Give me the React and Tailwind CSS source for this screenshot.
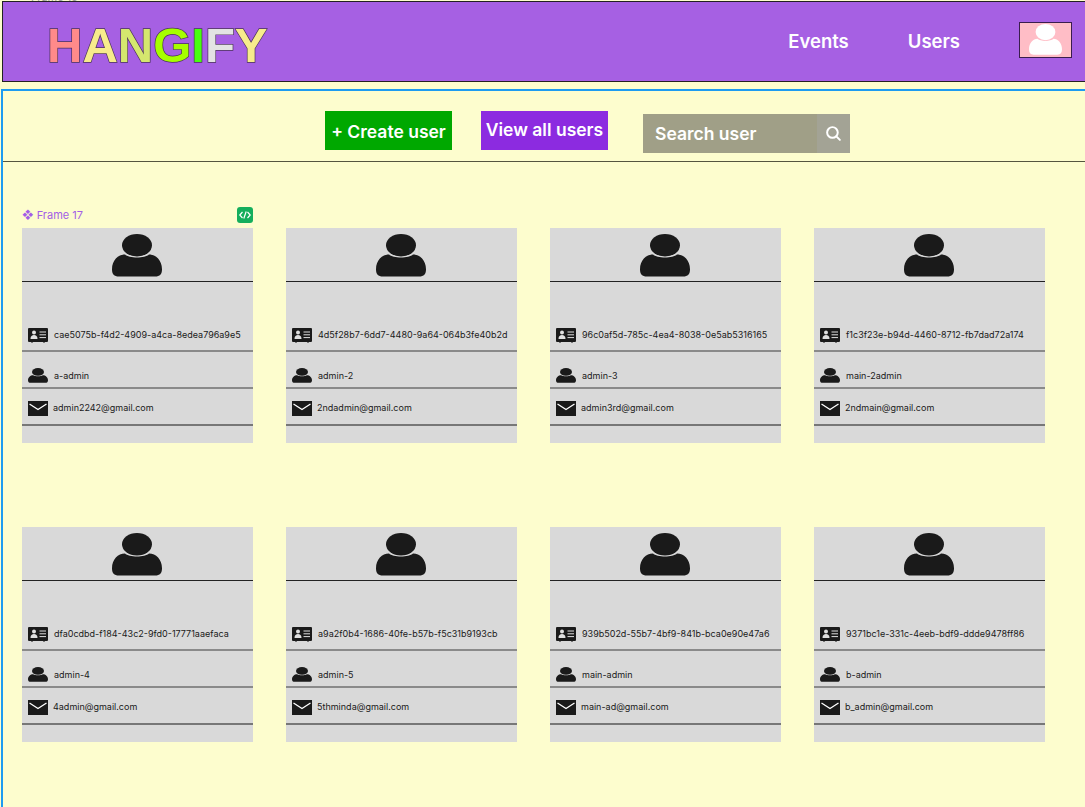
import React from "react";

const users = [
  ["cae5075b-f4d2-4909-a4ca-8edea796a9e5", "a-admin", "admin2242@gmail.com"],
  ["4d5f28b7-6dd7-4480-9a64-064b3fe40b2d", "admin-2", "2ndadmin@gmail.com"],
  ["96c0af5d-785c-4ea4-8038-0e5ab5316165", "admin-3", "admin3rd@gmail.com"],
  ["f1c3f23e-b94d-4460-8712-fb7dad72a174", "main-2admin", "2ndmain@gmail.com"],
  ["dfa0cdbd-f184-43c2-9fd0-17771aaefaca", "admin-4", "4admin@gmail.com"],
  ["a9a2f0b4-1686-40fe-b57b-f5c31b9193cb", "admin-5", "5thminda@gmail.com"],
  ["939b502d-55b7-4bf9-841b-bca0e90e47a6", "main-admin", "main-ad@gmail.com"],
  ["9371bc1e-331c-4eeb-bdf9-ddde9478ff86", "b-admin", "b_admin@gmail.com"],
];

function Person({ className, fill }) {
  return (
    <svg viewBox="0 0 50 44" className={className} fill={fill} preserveAspectRatio="none">
      <ellipse cx="25" cy="11.5" rx="15" ry="11.5" />
      <path d="M13 21 C17 25 33 25 37 21 C44 21 50 27 50 36 C50 41 48 43.5 43 43.5 L7 43.5 C2 43.5 0 41 0 36 C0 27 6 21 13 21 Z" />
    </svg>
  );
}

function IdCard() {
  return (
    <svg viewBox="0 0 20 15" className="h-[15px] w-5 shrink-0">
      <path fill="#1a1a1a" d="M1 0 H19 A1 1 0 0 1 20 1 V13 A1 1 0 0 1 19 14 H17 V14.6 H15 V14 H5 V14.6 H3 V14 H1 A1 1 0 0 1 0 13 V1 A1 1 0 0 1 1 0 Z" />
      <circle cx="6" cy="4.4" r="2" fill="#e0e0e0" />
      <path fill="#e0e0e0" d="M2.5 11 C2.5 8 4 7 6 7 C8 7 9.5 8 9.5 11 Z" />
      <path stroke="#e0e0e0" strokeWidth="1" d="M11.5 4 H18 M11.5 6.8 H18 M11.5 9.6 H18" />
    </svg>
  );
}

function Mail() {
  return (
    <svg viewBox="0 0 20 15" className="h-[15px] w-5 shrink-0">
      <rect width="20" height="15" fill="#1a1a1a" />
      <path d="M1.5 3 L10 8.5 L18.5 3" fill="none" stroke="#ffffff" strokeWidth="1.3" />
    </svg>
  );
}

function Card({ user, label }) {
  return (
    <div className="relative h-[215px] bg-[#d9d9d9] text-[9px] leading-3 text-[#1a1a1a]">
      {label && (
        <div className="absolute -top-[21px] left-0 right-0 flex items-center justify-between">
          <span className="text-[11px] leading-4 text-[#a35de6]">❖ Frame 17</span>
          <span className="flex h-4 w-4 items-center justify-center rounded-[3px] bg-[#14ae5c]">
            <svg viewBox="0 0 16 16" className="h-4 w-4" fill="none" stroke="#fff" strokeWidth="1.2">
              <path d="M5.5 5 L2.8 8 L5.5 11 M10.5 5 L13.2 8 L10.5 11 M9.2 4.5 L6.8 11.5" />
            </svg>
          </span>
        </div>
      )}
      <div className="flex h-[54px] justify-center border-b border-[#222222] pr-[2px] pt-[6px]">
        <Person className="h-[43px] w-[50px]" fill="#1a1a1a" />
      </div>
      <div className="flex h-[70px] items-end gap-[6px] border-b-2 border-[#8a8a8a] pb-[7px] pl-[6px]">
        <IdCard />
        <span className="whitespace-nowrap pb-[2px]">{user[0]}</span>
      </div>
      <div className="flex h-[37px] items-center gap-[6px] border-b-2 border-[#8a8a8a] pl-[6px] pt-[12px]">
        <Person className="h-[15px] w-5 shrink-0" fill="#1a1a1a" />
        <span>{user[1]}</span>
      </div>
      <div className="flex h-[37px] items-start gap-[5px] border-b-2 border-[#777777] pl-[6px] pt-[12px]">
        <Mail />
        <span className="pt-px">{user[2]}</span>
      </div>
    </div>
  );
}

export default function App() {
  return (
    <div className="relative h-[807px] w-[1085px] overflow-hidden bg-[#fdfdce] font-['Inter',sans-serif]">
      <div className="absolute -top-[11px] left-[31px] text-[11px] leading-4 text-[#9a9a9a]">Frame 13</div>
      <header className="ml-[2px] mt-px flex h-[81px] items-center border border-r-0 border-[#222222] bg-[#a660e3] pl-[44px] pr-[13px]">
        <div className="mt-[8px] font-['Liberation_Sans',sans-serif] text-[49px] font-bold leading-none [-webkit-text-stroke:1.4px_#4a3358] [paint-order:stroke_fill]">
          <span className="text-[#ff8a8a]">H</span>
          <span className="text-[#f7ec8c]">A</span>
          <span className="text-[#d5e76e]">N</span>
          <span className="text-[#a6ff00]">G</span>
          <span className="text-[#47ff0f]">I</span>
          <span className="text-[#e3e3e3]">F</span>
          <span className="text-[#f7ec8c]">Y</span>
        </div>
        <nav className="ml-auto flex items-center text-[18.5px] font-semibold text-white">
          <a className="mr-[59px]">Events</a>
          <a className="mr-[59px]">Users</a>
          <div className="mb-[3px] flex h-[36px] w-[53px] items-end justify-center border border-[#3a1d4d] bg-[#ffbdc6] pb-[2px]">
            <Person className="h-[31px] w-[33px]" fill="#ffffff" />
          </div>
        </nav>
      </header>
      <main className="ml-px mt-[7px] h-[720px] border-l-2 border-t-2 border-[#1d9bf0]">
        <div className="flex h-[71px] border-b border-[#55553f] pl-[322px] text-[17.5px] font-semibold text-white">
          <button className="mt-[20px] h-[39px] w-[127px] bg-[#00a800] pt-[4px]">+ Create user</button>
          <button className="ml-[29px] mt-[20px] h-[39px] w-[127px] bg-[#8c2be0]">View all users</button>
          <div className="ml-[35px] mt-[23px] flex h-[39px] w-[207px] bg-[#a09f87]">
            <span className="flex-1 pl-[12px] leading-[39px]">Search user</span>
            <span className="flex w-[33px] items-center justify-center bg-[#a3a395]">
              <svg viewBox="0 0 24 24" className="h-[17px] w-[17px]" fill="none" stroke="#fff" strokeWidth="2.8" strokeLinecap="round">
                <circle cx="10.5" cy="10.5" r="7.5" />
                <path d="M16 16 L21 21" />
              </svg>
            </span>
          </div>
        </div>
        <div className="ml-[19px] mt-[66px] grid w-[1023px] grid-cols-[repeat(4,231px)] gap-x-[33px] gap-y-[84px]">
          {users.map((u, i) => (
            <Card key={u[0]} user={u} label={i === 0} />
          ))}
        </div>
      </main>
    </div>
  );
}
